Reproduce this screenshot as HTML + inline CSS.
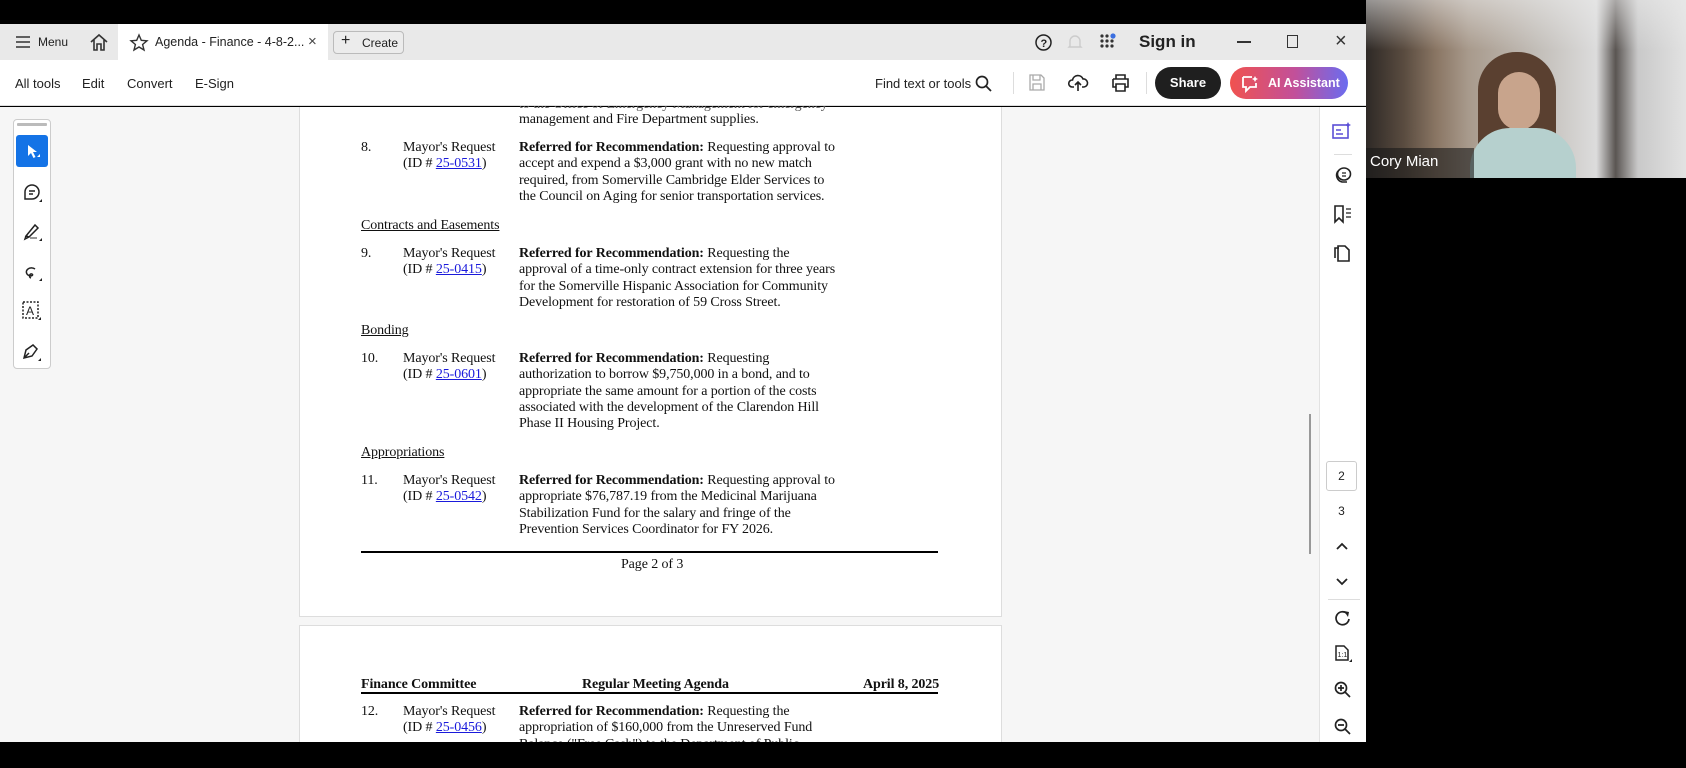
<!DOCTYPE html>
<html><head><meta charset="utf-8"><style>
*{margin:0;padding:0;box-sizing:border-box}
body{width:1686px;height:768px;background:#000;position:relative;overflow:hidden;font-family:"Liberation Sans",sans-serif}
.a{position:absolute}
.ui{font-family:"Liberation Sans",sans-serif;font-size:13px;color:#222;white-space:nowrap}
.t{position:absolute;font-family:"Liberation Serif",serif;font-size:14px;color:#111;white-space:nowrap;line-height:16.3px;letter-spacing:-0.1px}
.t b{font-weight:bold}
.lnk{color:#1a1adb;text-decoration:underline}
.u{text-decoration:underline}
svg{position:absolute;overflow:visible}
</style></head><body>
<div class="a" style="left:0;top:24px;width:1366px;height:36px;background:#e9e9e9"></div>
<div class="a" style="left:118px;top:24px;width:210px;height:36px;background:#fff"></div>
<svg style="left:15px;top:36px" width="16" height="12"><path d="M1 1H15M1 6H15M1 11H15" stroke="#333" stroke-width="1.5"/></svg>
<div class="a ui" style="left:38px;top:35px;font-size:12px">Menu</div>
<svg style="left:89px;top:33px" width="20" height="18"><path d="M2 9L10 2L18 9M5 7V17H8V11H12V17H15V7" fill="none" stroke="#333" stroke-width="1.6"/></svg>
<svg style="left:130px;top:34px" width="18" height="17"><path d="M9 1L11.3 6.3L17 6.8L12.6 10.5L14 16L9 13L4 16L5.4 10.5L1 6.8L6.7 6.3Z" fill="none" stroke="#333" stroke-width="1.4"/></svg>
<div class="a ui" style="left:155px;top:35px;font-size:12.5px">Agenda - Finance - 4-8-2...</div>
<div class="a ui" style="left:308px;top:33px;font-size:15px;color:#444">×</div>
<div class="a" style="left:333px;top:31px;width:71px;height:23px;border:1px solid #bbb;border-radius:4px;background:#ececec"></div>
<div class="a ui" style="left:341px;top:32px;font-size:16px">+</div>
<div class="a ui" style="left:362px;top:36px;font-size:12px">Create</div>
<svg style="left:1035px;top:34px" width="17" height="17"><circle cx="8.5" cy="8.5" r="7.5" fill="none" stroke="#222" stroke-width="1.5"/><text x="5.5" y="13" font-size="11" font-family="Liberation Sans" font-weight="bold" fill="#222">?</text></svg>
<svg style="left:1068px;top:33px" width="14" height="18"><path d="M2 13V8A5 5 0 0 1 12 8V13L13 14H1Z" fill="none" stroke="#ccc" stroke-width="1.4"/></svg>
<svg style="left:1100px;top:34px" width="18" height="16"><g fill="#333"><circle cx="2" cy="2" r="1.6"/><circle cx="7" cy="2" r="1.6"/><circle cx="2" cy="7" r="1.6"/><circle cx="7" cy="7" r="1.6"/><circle cx="12" cy="7" r="1.6"/><circle cx="2" cy="12" r="1.6"/><circle cx="7" cy="12" r="1.6"/><circle cx="12" cy="12" r="1.6"/></g><circle cx="13" cy="2" r="2.6" fill="#3b6fe0"/></svg>
<div class="a ui" style="left:1139px;top:32px;font-size:17px;font-weight:bold;color:#222">Sign in</div>
<div class="a" style="left:1237px;top:41px;width:14px;height:2px;background:#333"></div>
<div class="a" style="left:1287px;top:35px;width:11px;height:13px;border:1.5px solid #333"></div>
<div class="a ui" style="left:1335px;top:30px;font-size:20px;color:#333">×</div>
<div class="a" style="left:0;top:60px;width:1366px;height:46px;background:#fff;border-bottom:1px solid #ddd"></div>
<div class="a ui" style="left:15px;top:76px">All tools</div>
<div class="a ui" style="left:82px;top:76px">Edit</div>
<div class="a ui" style="left:127px;top:76px">Convert</div>
<div class="a ui" style="left:195px;top:76px">E-Sign</div>
<div class="a ui" style="left:875px;top:76px">Find text or tools</div>
<svg style="left:975px;top:75px" width="17" height="17"><circle cx="7" cy="7" r="5.5" fill="none" stroke="#222" stroke-width="1.7"/><path d="M11 11L16 16" stroke="#222" stroke-width="1.8"/></svg>
<div class="a" style="left:1013px;top:72px;width:1px;height:22px;background:#ddd"></div>
<svg style="left:1029px;top:74px" width="16" height="17"><path d="M1 1H12L15 4V16H1Z M4 1V6H11V1 M4 16V10H12V16" fill="none" stroke="#aaa" stroke-width="1.3"/></svg>
<svg style="left:1068px;top:73px" width="20" height="19"><path d="M6 14H4A3.5 3.5 0 0 1 4.5 7A5.5 5.5 0 0 1 15 6A4 4 0 0 1 16 14H14M10 18V9M7 12L10 9L13 12" fill="none" stroke="#222" stroke-width="1.6"/></svg>
<svg style="left:1111px;top:74px" width="19" height="18"><path d="M5 5V1H14V5M2 5H17V13H14M5 13H2V5M5 10H14V17H5Z" fill="none" stroke="#222" stroke-width="1.6"/></svg>
<div class="a" style="left:1146px;top:72px;width:1px;height:22px;background:#ddd"></div>
<div class="a ui" style="left:1155px;top:67px;width:66px;height:32px;border-radius:16px;background:#1f1f1f;color:#fff;font-weight:bold;font-size:13px;text-align:center;line-height:32px">Share</div>
<div class="a ui" style="left:1230px;top:67px;width:118px;height:32px;border-radius:16px;background:linear-gradient(90deg,#f0524f,#c2509a 55%,#6a6cf0);color:#fff;font-weight:bold;font-size:12.5px;line-height:32px;padding-left:38px">AI Assistant</div>
<svg style="left:1241px;top:75px" width="18" height="17"><path d="M2 2H11M2 2V12H5V16L9 12H15V8" fill="none" stroke="#fff" stroke-width="1.8"/><path d="M14 1L15 3L17 4L15 5L14 7L13 5L11 4L13 3Z" fill="#fff"/></svg>
<div class="a" style="left:0;top:107px;width:1319px;height:635px;background:#f6f6f6"></div>
<div class="a" style="left:13px;top:119px;width:38px;height:250px;border:1px solid #ccc;border-radius:4px;background:#fff"></div>
<div class="a" style="left:17px;top:123px;width:30px;height:3px;background:#bbb;border-radius:1px"></div>
<div class="a" style="left:16px;top:135px;width:32px;height:32px;background:#1473e6;border-radius:3px"></div>
<svg style="left:27px;top:144px" width="14" height="16"><path d="M1 1V12L4 9L6.5 14L8.5 13L6 8H10Z" fill="#fff"/><path d="M10 13L13 13L13 10Z" fill="#fff"/></svg>
<svg style="left:23px;top:183px" width="20" height="20"><path d="M9 2A7 7 0 1 1 9 16H2V9A7 7 0 0 1 9 2Z" fill="none" stroke="#222" stroke-width="1.5"/><path d="M6 8H12M6 11H10" stroke="#222" stroke-width="1.4"/><path d="M16 19L19 19L19 16Z" fill="#222"/></svg>
<svg style="left:23px;top:222px" width="20" height="20"><path d="M3 14L12 3L15 6L6 15Z M3 14L2 17L6 15" fill="none" stroke="#222" stroke-width="1.5"/><path d="M7 16H14" stroke="#999" stroke-width="2"/><path d="M16 19L19 19L19 16Z" fill="#222"/></svg>
<svg style="left:23px;top:262px" width="20" height="20"><path d="M12 7A5 4 0 1 0 5 13C8 15 11 13 9 12C7 11 5 15 8 16" fill="none" stroke="#222" stroke-width="1.5"/><path d="M16 19L19 19L19 16Z" fill="#222"/></svg>
<svg style="left:22px;top:301px" width="20" height="20"><rect x="1" y="1" width="15" height="16" fill="none" stroke="#222" stroke-width="1.5" stroke-dasharray="2 1.5"/><text x="4" y="14" font-size="12" font-family="Liberation Sans" fill="#222">A</text><path d="M16 19L19 19L19 16Z" fill="#222"/></svg>
<svg style="left:22px;top:342px" width="20" height="20"><path d="M2 16L4 8L11 3L15 7L10 14Z M2 16L7 11" fill="none" stroke="#222" stroke-width="1.5"/><path d="M16 19L19 19L19 16Z" fill="#222"/></svg>
<div class="a" style="left:299px;top:107px;width:703px;height:510px;background:#fff;border:1px solid #ddd;border-top:none"></div>
<div class="a" style="left:299px;top:625px;width:703px;height:130px;background:#fff;border:1px solid #ddd"></div>
<div class="a" style="left:1309px;top:414px;width:2px;height:140px;background:#999"></div>
<div class="a" style="left:1319px;top:107px;width:47px;height:635px;background:#fff;border-left:1px solid #e2e2e2"></div>
<svg style="left:1332px;top:122px" width="20" height="18"><rect x="1" y="3" width="15" height="13" fill="none" stroke="#5b4fd6" stroke-width="1.6"/><path d="M4 8H9M4 12H11" stroke="#5b4fd6" stroke-width="1.5"/><path d="M16 0L17 2L19 3L17 4L16 6L15 4L13 3L15 2Z" fill="#5b4fd6"/></svg>
<div class="a" style="left:1334px;top:154px;width:18px;height:1px;background:#ddd"></div>
<svg style="left:1333px;top:166px" width="19" height="18"><ellipse cx="11" cy="8" rx="6.5" ry="6" fill="none" stroke="#222" stroke-width="1.6"/><path d="M5 5A7 7 0 0 0 9 16H14" fill="none" stroke="#222" stroke-width="1.6"/><path d="M9 7H13M9 10H13" stroke="#222" stroke-width="1.3"/></svg>
<svg style="left:1333px;top:205px" width="19" height="18"><path d="M2 1H10V17L6 13L2 17Z" fill="none" stroke="#222" stroke-width="1.6"/><path d="M13 4H18M13 8H18M13 12H18" stroke="#222" stroke-width="1.3"/></svg>
<svg style="left:1334px;top:244px" width="18" height="19"><path d="M5 4H1V14" fill="none" stroke="#222" stroke-width="1.6"/><path d="M4 2H11L15 6V17H4Z" fill="none" stroke="#222" stroke-width="1.6"/></svg>
<div class="a ui" style="left:1326px;top:461px;width:31px;height:30px;border:1px solid #ccc;border-radius:3px;text-align:center;line-height:28px;font-size:12px">2</div>
<div class="a ui" style="left:1326px;top:504px;width:31px;text-align:center;font-size:12px">3</div>
<svg style="left:1336px;top:543px" width="12" height="8"><path d="M1 6L6 1L11 6" fill="none" stroke="#222" stroke-width="1.8"/></svg>
<svg style="left:1336px;top:578px" width="12" height="8"><path d="M1 1L6 6L11 1" fill="none" stroke="#222" stroke-width="1.8"/></svg>
<div class="a" style="left:1328px;top:599px;width:32px;height:1px;background:#ddd"></div>
<svg style="left:1334px;top:610px" width="18" height="17"><path d="M15 9A6.5 6.5 0 1 1 13 3.5" fill="none" stroke="#222" stroke-width="1.7"/><path d="M10 1L15 2L14 7Z" fill="#222"/></svg>
<svg style="left:1335px;top:645px" width="18" height="18"><path d="M1 1H9L13 5V15H1Z" fill="none" stroke="#222" stroke-width="1.5"/><text x="2.5" y="12" font-size="7" font-family="Liberation Sans" fill="#222">1:1</text><path d="M14 17L17 17L17 14Z" fill="#222"/></svg>
<svg style="left:1334px;top:681px" width="18" height="18"><circle cx="7" cy="7" r="5.5" fill="none" stroke="#222" stroke-width="1.7"/><path d="M11 11L16 16M4 7H10M7 4V10" stroke="#222" stroke-width="1.7"/></svg>
<svg style="left:1334px;top:718px" width="18" height="18"><circle cx="7" cy="7" r="5.5" fill="none" stroke="#222" stroke-width="1.7"/><path d="M11 11L16 16M4 7H10" stroke="#222" stroke-width="1.7"/></svg>
<div class="t" style="left:519px;top:97px;color:#555;clip-path:inset(9px 0 0 0)">to the Office of Emergency Management for emergency</div>
<div class="t" style="left:519px;top:112px">management and Fire Department supplies.</div>

<div class="t" style="left:361px;top:140px">8.</div>
<div class="t" style="left:403px;top:140px">Mayor's Request<br>(ID # <span class="lnk">25-0531</span>)</div>
<div class="t" style="left:519px;top:140px"><b>Referred for Recommendation:</b> Requesting approval to<br>accept and expend a $3,000 grant with no new match<br>required, from Somerville Cambridge Elder Services to<br>the Council on Aging for senior transportation services.</div>

<div class="t u" style="left:361px;top:218px">Contracts and Easements</div>
<div class="t" style="left:361px;top:246px">9.</div>
<div class="t" style="left:403px;top:246px">Mayor's Request<br>(ID # <span class="lnk">25-0415</span>)</div>
<div class="t" style="left:519px;top:246px"><b>Referred for Recommendation:</b> Requesting the<br>approval of a time-only contract extension for three years<br>for the Somerville Hispanic Association for Community<br>Development for restoration of 59 Cross Street.</div>

<div class="t u" style="left:361px;top:323px">Bonding</div>
<div class="t" style="left:361px;top:351px">10.</div>
<div class="t" style="left:403px;top:351px">Mayor's Request<br>(ID # <span class="lnk">25-0601</span>)</div>
<div class="t" style="left:519px;top:351px"><b>Referred for Recommendation:</b> Requesting<br>authorization to borrow $9,750,000 in a bond, and to<br>appropriate the same amount for a portion of the costs<br>associated with the development of the Clarendon Hill<br>Phase II Housing Project.</div>

<div class="t u" style="left:361px;top:445px">Appropriations</div>
<div class="t" style="left:361px;top:473px">11.</div>
<div class="t" style="left:403px;top:473px">Mayor's Request<br>(ID # <span class="lnk">25-0542</span>)</div>
<div class="t" style="left:519px;top:473px"><b>Referred for Recommendation:</b> Requesting approval to<br>appropriate $76,787.19 from the Medicinal Marijuana<br>Stabilization Fund for the salary and fringe of the<br>Prevention Services Coordinator for FY 2026.</div>

<div class="a" style="left:361px;top:551px;width:577px;height:2px;background:#000"></div>
<div class="t" style="left:621px;top:557px">Page 2 of 3</div>

<div class="t" style="left:361px;top:677px"><b>Finance Committee</b></div>
<div class="t" style="left:582px;top:677px"><b>Regular Meeting Agenda</b></div>
<div class="t" style="left:863px;top:677px"><b>April 8, 2025</b></div>
<div class="a" style="left:361px;top:692px;width:577px;height:2px;background:#000"></div>
<div class="t" style="left:361px;top:704px">12.</div>
<div class="t" style="left:403px;top:704px">Mayor's Request<br>(ID # <span class="lnk">25-0456</span>)</div>
<div class="t" style="left:519px;top:704px"><b>Referred for Recommendation:</b> Requesting the<br>appropriation of $160,000 from the Unreserved Fund<br>Balance ("Free Cash") to the Department of Public</div>
<div class="a" style="left:0;top:742px;width:1366px;height:26px;background:#000"></div>
<!-- video -->
<div class="a" style="left:1366px;top:0;width:320px;height:178px;background:linear-gradient(90deg,#2e2926 0%,#5a4c40 12%,#8a7664 22%,#a89a8c 32%,#c4c0bb 55%,#dcdcdc 72%,#5a5552 78%,#c9c9c9 85%,#e2e2e2 100%)"></div>
<div class="a" style="left:1366px;top:0;width:320px;height:50px;background:linear-gradient(180deg,rgba(235,235,235,.55),rgba(0,0,0,0))"></div>
<div class="a" style="left:1478px;top:52px;width:78px;height:110px;border-radius:38px 38px 10px 10px;background:#5a4030"></div>
<div class="a" style="left:1498px;top:72px;width:42px;height:58px;border-radius:21px;background:#c8a48c"></div>
<div class="a" style="left:1470px;top:128px;width:106px;height:50px;border-radius:40px 40px 0 0;background:#b6d0ce"></div>
<div class="a" style="left:1366px;top:148px;width:108px;height:30px;background:rgba(25,25,25,.6)"></div>
<div class="a ui" style="left:1370px;top:153px;color:#fff;font-size:15px">Cory Mian</div>
</body></html>
